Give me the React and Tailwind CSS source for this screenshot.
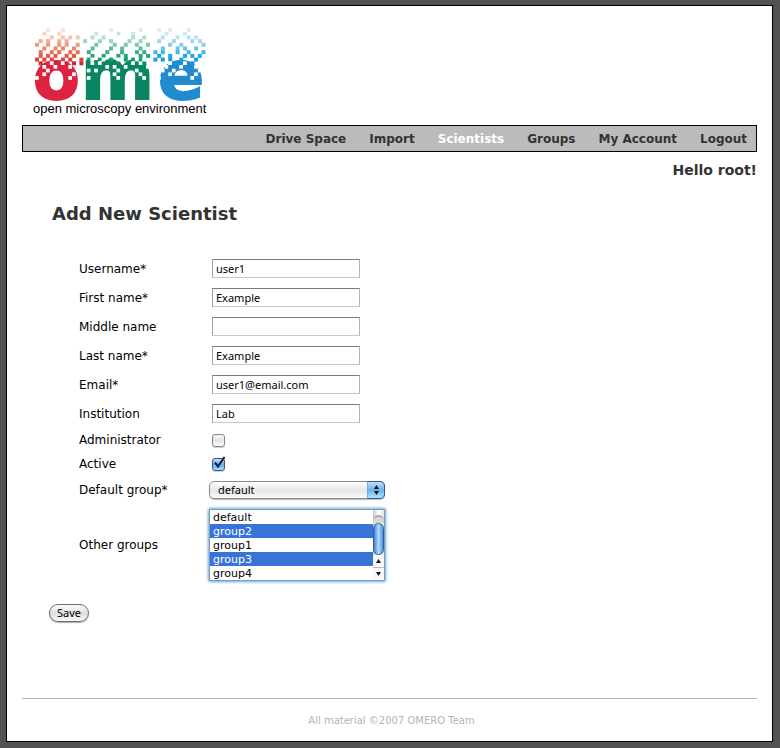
import React from "react";

const NAV = ["Drive Space", "Import", "Scientists", "Groups", "My Account", "Logout"];

const FIELDS = [
  { id: "username", label: "Username*", value: "user1" },
  { id: "first-name", label: "First name*", value: "Example" },
  { id: "middle-name", label: "Middle name", value: "" },
  { id: "last-name", label: "Last name*", value: "Example" },
  { id: "email", label: "Email*", value: "user1@email.com" },
  { id: "institution", label: "Institution", value: "Lab" },
];

const GROUPS = ["default", "group2", "group1", "group3", "group4"];

// Pitch of the logo's pixel grid and side of one pixel, in view box units.
const CELL = 3.7;
const DOT = 4;

// Columns of the scattered pixels, one list for each row from the top.
const RED_DOTS = [
  [3, 7],
  [2, 6],
  [4, 7, 9, 11],
  [1, 3, 6, 8],
  [0, 3, 6, 8, 11],
  [2, 5, 7, 10],
  [1, 4, 6, 9, 11],
  [1, 3, 5, 8, 10],
  [0, 2, 4, 7, 9, 12],
  [1, 5, 8, 10, 12],
];
const GREEN_DOTS = [
  [20, 28],
  [16, 22, 26],
  [15, 18, 26, 29],
  [13, 17, 20, 25, 28],
  [16, 21, 24, 27, 30],
  [15, 20, 23, 28],
  [14, 19, 23, 27, 29],
  [15, 18, 22, 24, 28, 30],
  [14, 17, 20, 24, 26, 28],
  [16, 19, 22, 25, 29],
];
const BLUE_DOTS = [
  [33, 36, 41],
  [35, 40],
  [34, 38, 41, 43],
  [33, 37, 42, 44],
  [36, 39, 45],
  [34, 38, 40, 43],
  [32, 34, 38, 41, 45],
  [33, 36, 40, 42, 44],
  [32, 34, 36, 39, 43],
  [37, 38, 40, 42],
];
const HOLES = [
  [8, [15, 18, 22, 27, 29]],
  [9, [4, 7, 15, 17, 26, 28, 36, 40]],
  [10, [2, 5, 9, 19, 21, 24, 30, 35, 39, 43]],
  [11, [3, 14, 16, 22, 27, 34, 37, 44]],
  [12, [2, 10, 21, 28, 36, 43]],
  [13, [0, 9, 14, 22, 29, 33, 42]],
];

const RED = ["#fbe3da", "#f9d5c8", "#f6c3b0", "#f2ad96", "#ee9a80", "#ea876b", "#e57258", "#e05a48", "#dc443f", "#c92a3c"];
const GREEN = ["#dcefe6", "#cbe8dc", "#b5dece", "#9dd4c0", "#7fc7ad", "#62bc9b", "#3cae8a", "#27a580", "#179b76", "#0b8f69"];
const BLUE = ["#dceefa", "#cde8f9", "#bbe1f7", "#a3d8f4", "#86cdf1", "#69c3ee", "#42b5e9", "#1fa9e4", "#1f9ddb", "#218fd0"];

function Dots({ rows, colors }) {
  return rows.map((cols, r) =>
    cols.map((c) => (
      <rect key={`${r}-${c}`} x={2 + c * CELL} y={3 + r * CELL} width={DOT} height={DOT} fill={colors[r]} />
    ))
  );
}

function Logo() {
  return (
    <div className="w-fit">
      <svg className="block h-[76px] w-[174px] overflow-visible" viewBox="0 0 174 76" role="img" aria-label="ome">
        <g fontFamily="'DejaVu Sans'" fontWeight="700" strokeWidth="2">
          <text x="0" y="74" fontSize="68" fill="#dc2440" stroke="#dc2440">o</text>
          <text x="48" y="74" fontSize="70" fill="#0a8561" stroke="#0a8561">m</text>
          <text x="125" y="74" fontSize="68" fill="#218bcd" stroke="#218bcd">e</text>
        </g>
        <Dots rows={RED_DOTS} colors={RED} />
        <Dots rows={GREEN_DOTS} colors={GREEN} />
        <Dots rows={BLUE_DOTS} colors={BLUE} />
        {HOLES.map(([r, cols]) =>
          cols.map((c) => (
            <rect key={`${r}-${c}`} x={2 + c * CELL} y={3 + r * CELL} width={CELL} height={CELL} fill="#fff" />
          ))
        )}
      </svg>
      <p className="font-['Liberation_Sans',Arial,sans-serif] text-[13px] leading-4 text-black">
        open microscopy environment
      </p>
    </div>
  );
}

function Row({ id, label, height, children }) {
  return (
    <div className={`flex items-center ${height}`}>
      <label htmlFor={id} className="w-[130px] shrink-0">{label}</label>
      {children}
    </div>
  );
}

function Checkbox({ id, defaultChecked }) {
  return (
    <span className="relative ml-[3px] block size-[13px]">
      <input
        id={id}
        type="checkbox"
        defaultChecked={defaultChecked}
        className="peer block size-[13px] appearance-none rounded-[3px] border border-[#858585] bg-linear-to-b from-[#fafafa] via-[#e4e4e4] to-white shadow-[0_1px_1px_#d0d0d0] checked:border-[#35588c] checked:from-[#c3dcf6] checked:via-[#6ba9e8] checked:to-[#a6e0fc]"
      />
      <svg
        className="pointer-events-none absolute -top-[2px] left-0 hidden h-[14px] w-[14px] peer-checked:block"
        viewBox="0 0 14 14"
        fill="none"
        stroke="#0b1830"
        strokeWidth="2"
      >
        <path d="M3 6.5 L6 10.5 L12.5 1" />
      </svg>
    </span>
  );
}

function Arrow({ up }) {
  return (
    <svg className="block h-[4px] w-[5px]" viewBox="0 0 5 4" fill="#111">
      <path d={up ? "M2.5 0 L5 4 H0 Z" : "M0 0 H5 L2.5 4 Z"} />
    </svg>
  );
}

export default function App() {
  return (
    <div className="flex min-h-screen bg-[#525252] pt-[5px] pr-[7px] pb-[6px] pl-[6px] font-['DejaVu_Sans',Verdana,sans-serif] text-[12px] text-[#333]">
      <div className="flex flex-1 flex-col border border-black bg-white px-[15px]">
        <header>
          <div className="pt-[19px] pb-2 pl-[11px]">
            <Logo />
          </div>
          <nav className="flex h-[27px] items-center justify-end gap-[23px] border border-black bg-[#bbb] pr-[9px] font-bold">
            {NAV.map((item) => (
              <a key={item} href="#" className={item === "Scientists" ? "text-white" : "text-[#333]"}>
                {item}
              </a>
            ))}
          </nav>
          <p className="mt-2 text-right text-[14px] leading-5 font-bold">Hello root!</p>
        </header>

        <main className="flex-1 pl-[27px]">
          <h1 className="mt-[22px] ml-[3px] text-[18px] leading-6 font-bold">Add New Scientist</h1>
          <form onSubmit={(e) => e.preventDefault()}>
            <div className="mt-7 ml-[30px] text-black">
              {FIELDS.map((f) => (
                <Row key={f.id} id={f.id} label={f.label} height="h-[29px]">
                  <input
                    id={f.id}
                    type="text"
                    defaultValue={f.value}
                    className="ml-[3px] h-[19px] w-[148px] border border-t-[#7b7b7b] border-r-[#b5b5b5] border-b-[#c8c8c8] border-l-[#a0a0a0] bg-white px-[3px] font-['Noto_Sans','Lucida_Grande',sans-serif] text-[11px] outline-none"
                  />
                </Row>
              ))}
              <Row id="administrator" label="Administrator" height="h-6">
                <Checkbox id="administrator" />
              </Row>
              <Row id="active" label="Active" height="h-6">
                <Checkbox id="active" defaultChecked />
              </Row>
              <Row id="default-group" label="Default group*" height="h-7">
                <span className="relative block h-[18px] w-44">
                  <select
                    id="default-group"
                    className="block h-[18px] w-full appearance-none rounded-[5px] border border-[#8a8a8a] bg-linear-to-b from-white via-[#e6e6e6] to-[#fbfbfb] pl-2 font-['Noto_Sans','Lucida_Grande',sans-serif] text-[11px] leading-4 shadow-[0_1px_1px_#bbb] outline-none"
                  >
                    {GROUPS.map((g) => (
                      <option key={g}>{g}</option>
                    ))}
                  </select>
                  <span className="pointer-events-none absolute top-0 right-0 flex h-[18px] w-[18px] flex-col items-center justify-center gap-[2px] rounded-r-[5px] border border-[#35588c] border-l-[#7fa9d8] bg-linear-to-b from-[#c3dcf6] via-[#6fb0ee] to-[#a6e6fe]">
                    <Arrow up />
                    <Arrow />
                  </span>
                </span>
              </Row>
              <Row id="other-groups" label="Other groups" height="h-[82px]">
                <span className="relative block h-[72px] w-44 rounded-[1px] shadow-[0_0_3px_1px_#6da5d8]">
                  <select
                    id="other-groups"
                    multiple
                    size={5}
                    defaultValue={["group2", "group3"]}
                    className="block h-[72px] w-full overflow-hidden border border-[#7c9dbd] bg-white p-0 font-['DejaVu_Sans','Lucida_Grande',sans-serif] text-[11px] outline-none [scrollbar-width:none]"
                  >
                    {GROUPS.map((g) => (
                      <option
                        key={g}
                        className="h-[14px] min-h-0 px-[3px] pt-px pb-0 text-black checked:bg-[linear-gradient(#3874d8,#3874d8)] checked:text-white"
                      >
                        {g}
                      </option>
                    ))}
                  </select>
                  <span className="pointer-events-none absolute top-px right-px flex h-[70px] w-[11px] flex-col items-center bg-linear-to-r from-[#c9c9c9] via-white to-[#e6e6e6]">
                    <span className="mt-[5px] h-[8px] w-full rounded-t-full border-t-2 border-[#a8a8a8] bg-[#d8d8d8]" />
                    <span className="h-[32px] w-full shrink-0 rounded-full border border-[#2a5ca8] bg-linear-to-r from-[#3f80d0] via-[#b5dcfa] to-[#4c90dc]" />
                    <span className="flex h-[13px] w-full items-center justify-center border-b border-[#bbb] bg-[#f7f7f7]">
                      <Arrow up />
                    </span>
                    <span className="flex h-[12px] w-full items-center justify-center bg-[#f7f7f7]">
                      <Arrow />
                    </span>
                  </span>
                </span>
              </Row>
            </div>
            <button
              type="submit"
              className="mt-[18px] block h-[18px] w-10 rounded-full border border-[#6f6f6f] bg-linear-to-b from-white via-[#dedede] to-[#f8f8f8] font-['Noto_Sans','Lucida_Grande',sans-serif] text-[11px] leading-4 text-black shadow-[0_1px_1px_#aaa]"
            >
              Save
            </button>
          </form>
        </main>

        <footer className="h-[43px] border-t border-[#b5b5b5] pt-[14px] pl-1 text-center text-[10px] leading-4 text-[#b5b5b5]">
          All material ©2007 OMERO Team
        </footer>
      </div>
    </div>
  );
}
